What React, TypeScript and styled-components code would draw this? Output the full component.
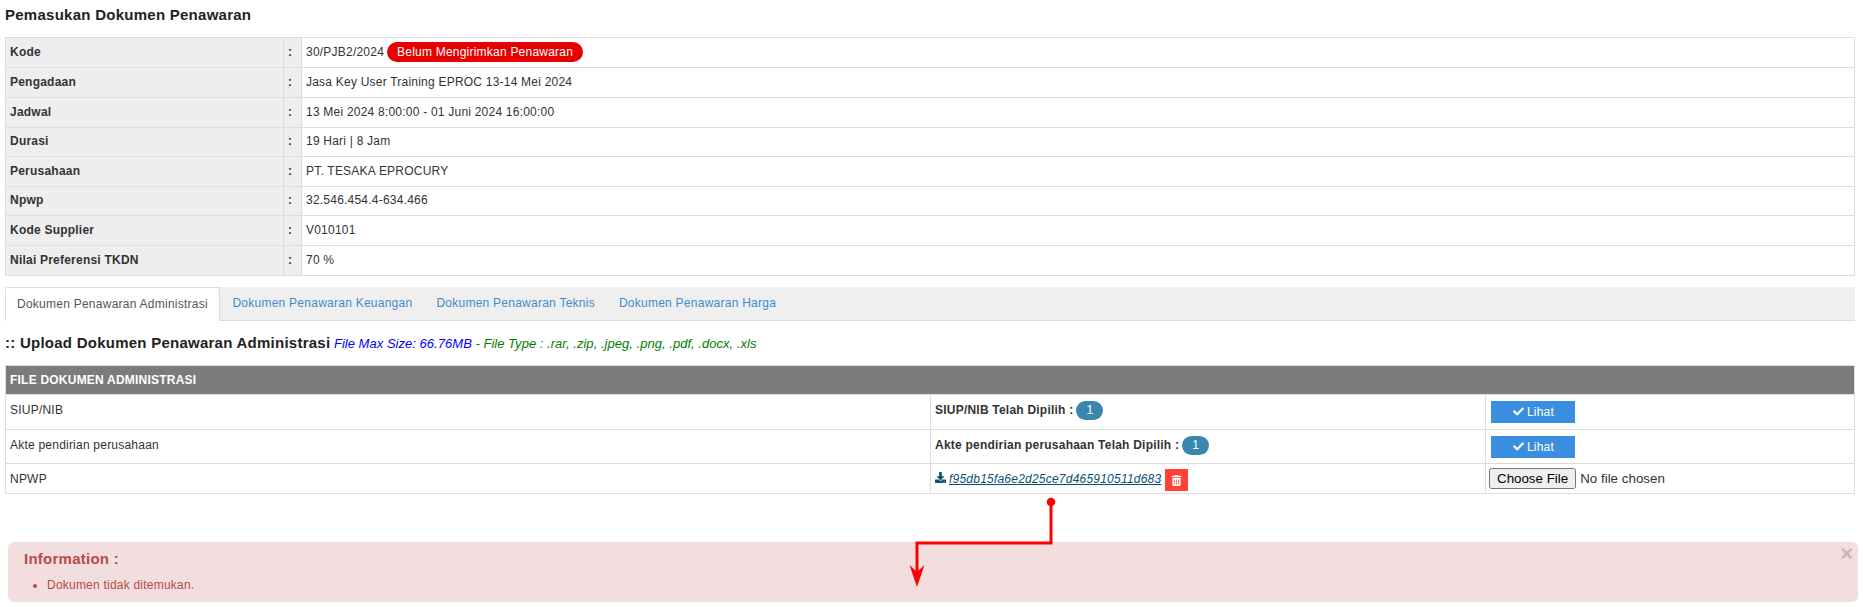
import React from 'react';
import styled, { createGlobalStyle } from 'styled-components';
import { FaCheck, FaDownload, FaTrashAlt } from 'react-icons/fa';

const GlobalStyle = createGlobalStyle`
  html, body {
    margin: 0;
    padding: 0;
    background: #fff;
  }
  body {
    font-family: "Liberation Sans", Arial, sans-serif;
    font-size: 12px;
    letter-spacing: 0.22px;
    color: #333;
  }
`;

const Page = styled.div`
  position: relative;
  width: 1863px;
  height: 607px;
  overflow: hidden;
  padding: 0 8px 0 5px;
  box-sizing: border-box;
`;

const Title = styled.h3`
  margin: 0;
  height: 37px;
  padding-top: 7px;
  box-sizing: border-box;
  font-size: 15px;
  letter-spacing: 0.26px;
  line-height: 16px;
  font-weight: bold;
  color: #222;
`;

const InfoTable = styled.table`
  width: 1850px;
  border-collapse: collapse;
  table-layout: fixed;
  margin-bottom: 11px;

  td {
    border: 1px solid #ddd;
    padding: 0 4px 2px;
    box-sizing: border-box;
    line-height: 16px;
  }
`;

const InfoRow = styled.tr<{ $height: number }>`
  height: ${(p) => p.$height}px;
`;

const LabelCell = styled.td`
  width: 278px;
  background: #eee;
  font-weight: bold;
`;

const ColonCell = styled.td`
  width: 18px;
  background: #eee;
  font-weight: bold;
`;

const StatusPill = styled.span`
  display: inline-block;
  margin-left: 3px;
  padding: 0 10px;
  height: 20px;
  line-height: 20px;
  border-radius: 10px;
  background: #e60000;
  color: #fff;
`;

const TabBar = styled.div`
  display: flex;
  width: 1850px;
  height: 34px;
  background: #efefef;
  border-bottom: 1px solid #ddd;
  box-sizing: border-box;
`;

const Tab = styled.div<{ $active?: boolean }>`
  padding: ${(p) => (p.$active ? '0 11.5px 0 11px' : '0 12px')};
  height: ${(p) => (p.$active ? '34px' : '33px')};
  line-height: 33px;
  box-sizing: border-box;
  letter-spacing: 0.25px;
  color: ${(p) => (p.$active ? '#555' : '#428bca')};
  background: ${(p) => (p.$active ? '#fff' : 'transparent')};
  border: ${(p) => (p.$active ? '1px solid #ddd' : '0')};
  border-bottom: 0;
  border-radius: ${(p) => (p.$active ? '3px 3px 0 0' : '0')};
`;

const UploadHeading = styled.div`
  height: 44px;
  padding-top: 14px;
  box-sizing: border-box;
  line-height: 16px;
  white-space: nowrap;
`;

const HeadingStrong = styled.strong`
  font-size: 15px;
  letter-spacing: 0.25px;
  color: #222;
`;

const SizeNote = styled.em`
  font-size: 13px;
  letter-spacing: 0.03px;
  color: #0000ff;
`;

const TypeNote = styled.em`
  font-size: 13px;
  letter-spacing: 0.03px;
  color: #008000;
`;

const FileTable = styled.table`
  width: 1850px;
  border-collapse: collapse;
  table-layout: fixed;

  td, th {
    border: 1px solid #ddd;
    padding: 0 4px;
    box-sizing: border-box;
    vertical-align: top;
    text-align: left;
  }

  th {
    height: 29px;
    vertical-align: middle;
    background: #7b7b7b;
    color: #fff;
  }
`;

const FileRow = styled.tr<{ $height: number }>`
  height: ${(p) => p.$height}px;
`;

const NameCell = styled.td`
  padding-top: 7px !important;
  line-height: 16px;
`;

const StatusCell = styled.td`
  padding-top: 5px !important;
  line-height: 20px;
`;

const CountBadge = styled.span`
  display: inline-block;
  margin-left: 3px;
  min-width: 27px;
  height: 19px;
  line-height: 19px;
  border-radius: 10px;
  background: #3a87ad;
  color: #fff;
  text-align: center;
`;

const ActionCell = styled.td`
  padding-top: 6px !important;
`;

const ViewButton = styled.button`
  display: flex;
  align-items: center;
  justify-content: center;
  gap: 3px;
  width: 84px;
  height: 22px;
  margin-left: 1px;
  padding: 0 0 1px 1px;
  border: 0;
  background: #398ee0;
  color: #fff;
  font: inherit;
  letter-spacing: inherit;
`;

const FileLink = styled.a`
  margin-left: 3px;
  color: #0b5175;
  font-style: italic;
  text-decoration: underline;
`;

const DeleteButton = styled.span`
  display: inline-flex;
  align-items: center;
  justify-content: center;
  vertical-align: middle;
  margin-left: 4px;
  width: 23px;
  height: 22px;
  background: #ff4136;
  color: #fff;
`;

const FileInput = styled.input`
  display: block;
  margin: -2px 0 0 -1px;
  font-family: "Liberation Sans", Arial, sans-serif;
  font-size: 13.33px;
  letter-spacing: 0.02px;
`;

const Alert = styled.div`
  position: relative;
  width: 1850px;
  height: 60px;
  margin: 48px 0 0 3px;
  padding: 7px 16px;
  box-sizing: border-box;
  background: #f2dede;
  border-radius: 6px;
  color: #b94a48;
`;

const AlertTitle = styled.h4`
  margin: 0;
  font-size: 15px;
  letter-spacing: 0.25px;
  line-height: 20px;
`;

const AlertList = styled.ul`
  margin: 8px 0 0;
  padding-left: 23px;
  line-height: 16px;
`;

const CloseMark = styled.span`
  position: absolute;
  top: 1px;
  right: 5px;
  font-size: 22px;
  line-height: 22px;
  font-weight: bold;
  letter-spacing: normal;
  color: #c9b8b8;
`;

const CalloutArrow = styled.svg`
  position: absolute;
  left: 900px;
  top: 490px;
`;

const infoRows: [string, React.ReactNode, number][] = [
  ['Kode', <>30/PJB2/2024<StatusPill>Belum Mengirimkan Penawaran</StatusPill></>, 30],
  ['Pengadaan', 'Jasa Key User Training EPROC 13-14 Mei 2024', 30],
  ['Jadwal', '13 Mei 2024 8:00:00 - 01 Juni 2024 16:00:00', 30],
  ['Durasi', '19 Hari | 8 Jam', 29],
  ['Perusahaan', 'PT. TESAKA EPROCURY', 30],
  ['Npwp', '32.546.454.4-634.466', 29],
  ['Kode Supplier', 'V010101', 30],
  ['Nilai Preferensi TKDN', '70 %', 30],
];

const tabs = [
  'Dokumen Penawaran Administrasi',
  'Dokumen Penawaran Keuangan',
  'Dokumen Penawaran Teknis',
  'Dokumen Penawaran Harga',
];

export default function App() {
  return (
    <Page>
      <GlobalStyle />
      <Title>Pemasukan Dokumen Penawaran</Title>
      <InfoTable>
        <tbody>
          {infoRows.map(([label, value, height]) => (
            <InfoRow key={label} $height={height}>
              <LabelCell>{label}</LabelCell>
              <ColonCell>:</ColonCell>
              <td>{value}</td>
            </InfoRow>
          ))}
        </tbody>
      </InfoTable>
      <TabBar>
        {tabs.map((tab, i) => (
          <Tab key={tab} $active={i === 0}>{tab}</Tab>
        ))}
      </TabBar>
      <UploadHeading>
        <HeadingStrong>:: Upload Dokumen Penawaran Administrasi</HeadingStrong>{' '}
        <SizeNote>File Max Size: 66.76MB</SizeNote> <TypeNote>- File Type : .rar, .zip, .jpeg, .png, .pdf, .docx, .xls</TypeNote>
      </UploadHeading>
      <FileTable>
        <colgroup>
          <col style={{ width: 925 }} />
          <col style={{ width: 555 }} />
          <col />
        </colgroup>
        <thead>
          <tr>
            <th colSpan={3}>FILE DOKUMEN ADMINISTRASI</th>
          </tr>
        </thead>
        <tbody>
          <FileRow $height={35}>
            <NameCell>SIUP/NIB</NameCell>
            <StatusCell><b>SIUP/NIB Telah Dipilih :</b><CountBadge>1</CountBadge></StatusCell>
            <ActionCell><ViewButton><FaCheck size={11} />Lihat</ViewButton></ActionCell>
          </FileRow>
          <FileRow $height={34}>
            <NameCell>Akte pendirian perusahaan</NameCell>
            <StatusCell><b>Akte pendirian perusahaan Telah Dipilih :</b><CountBadge>1</CountBadge></StatusCell>
            <ActionCell><ViewButton><FaCheck size={11} />Lihat</ViewButton></ActionCell>
          </FileRow>
          <FileRow $height={30}>
            <NameCell>NPWP</NameCell>
            <StatusCell>
              <FaDownload size={11} color="#0b5175" />
              <FileLink>f95db15fa6e2d25ce7d465910511d683</FileLink>
              <DeleteButton><FaTrashAlt size={11} /></DeleteButton>
            </StatusCell>
            <ActionCell><FileInput type="file" /></ActionCell>
          </FileRow>
        </tbody>
      </FileTable>
      <Alert>
        <AlertTitle>Information :</AlertTitle>
        <AlertList><li>Dokumen tidak ditemukan.</li></AlertList>
        <CloseMark>×</CloseMark>
      </Alert>
      <CalloutArrow width="170" height="105" viewBox="0 0 170 105">
        <circle cx="151" cy="12" r="4.300" fill="#f00" />
        <path d="M151 12V53H17V84" fill="none" stroke="#f00" strokeWidth="3" />
        <path d="M17 97 9.500 75 17 82 24.500 75z" fill="#f00" />
      </CalloutArrow>
    </Page>
  );
}
